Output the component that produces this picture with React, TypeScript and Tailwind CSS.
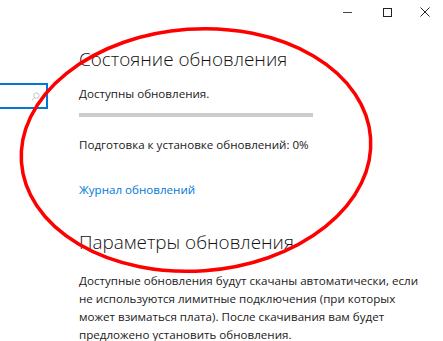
import React from "react";

export default function App() {
  return (
    <div className="relative w-[443px] h-[341px] bg-white overflow-hidden text-[#1a1a1a] font-['Open_Sans',sans-serif]">
      <div className="flex justify-end items-center h-[24px] text-[#222]">
        <div className="w-[40px] h-[24px] flex items-center justify-center">
          <div className="w-[9px] h-[1px] bg-[#444]" />
        </div>
        <div className="w-[40px] h-[24px] flex items-center justify-center">
          <div className="w-[9px] h-[9px] border border-[#222]" />
        </div>
        <div className="w-[36px] h-[24px] flex items-center justify-center">
          <svg width="10" height="10" viewBox="0 0 10 10">
            <path d="M0.5 0.5 L9.5 9.5 M9.5 0.5 L0.5 9.5" stroke="#222" strokeWidth="1" />
          </svg>
        </div>
      </div>
      <div className="flex">
        <div className="w-[48px] shrink-0 pt-[59px]">
          <div className="h-[26px] border-2 border-l-0 border-[#0078d7] flex items-center justify-end pr-[6px]">
            <svg width="9" height="9" viewBox="0 0 10 10">
              <circle cx="6" cy="4" r="3" fill="none" stroke="#bbb" strokeWidth="1" />
              <path d="M4 6 L1 9" stroke="#bbb" strokeWidth="1" />
            </svg>
          </div>
        </div>
        <div className="pl-[31px] flex flex-col">
          <div className="text-[18.9px] font-light leading-[28px] mt-[21px] text-[#111]">Состояние обновления</div>
          <div className="text-[11.6px] leading-[18px] mt-[12px]">Доступны обновления.</div>
          <div className="w-[234px] h-[4px] bg-[#cccccc] mt-[10px]" />
          <div className="text-[11.6px] leading-[18px] mt-[19px]">Подготовка к установке обновлений: 0%</div>
          <div className="text-[11.6px] leading-[18px] mt-[27px] text-[#0078d7]">Журнал обновлений</div>
          <div className="text-[18.9px] font-light leading-[28px] mt-[29px] text-[#111]">Параметры обновления</div>
          <div className="text-[11.6px] leading-[18px] mt-[16px] w-[352px]">
            Доступные обновления будут скачаны автоматически, если не используются лимитные подключения (при которых может взиматься плата). После скачивания вам будет предложено установить обновления.
          </div>
        </div>
      </div>
      <svg className="absolute left-0 top-0 pointer-events-none" width="443" height="341" viewBox="0 0 443 341">
        <ellipse cx="196" cy="150" rx="175" ry="121" fill="none" stroke="#ff0000" strokeWidth="3.5" transform="rotate(-4 196 150)" />
      </svg>
    </div>
  );
}
